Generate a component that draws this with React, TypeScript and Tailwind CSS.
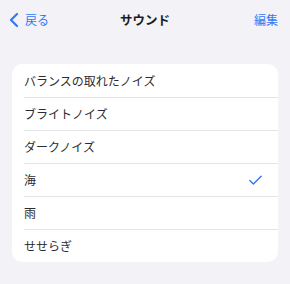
import { Check, ChevronLeft } from "lucide-react";

const sounds = ["バランスの取れたノイズ", "ブライトノイズ", "ダークノイズ", "海", "雨", "せせらぎ"];

export default function App() {
  const selected = "海";
  return (
    <div
      className="w-[290px] h-[284px] bg-[#f2f2f7] text-[#1c1c1e]"
      style={{ fontFamily: '"Noto Sans CJK JP", "Noto Sans", sans-serif' }}
    >
      {/* Nav bar */}
      <div className="relative flex items-center justify-between h-[40px] pl-[2px] pr-[12px]">
        <button className="flex items-center text-[#3478f6] text-[12px]">
          <ChevronLeft size={24} strokeWidth={2.2} className="-mr-[1px]" />
          <span>戻る</span>
        </button>
        <div className="absolute left-1/2 -translate-x-1/2 text-[12.5px] font-bold">サウンド</div>
        <button className="text-[#3478f6] text-[12px]">編集</button>
      </div>

      {/* List */}
      <div className="mx-[12px] mt-[24px] bg-white rounded-[10px] overflow-hidden">
        {sounds.map((s, i) => (
          <div key={s} className="pl-[12px]">
            <div
              className={`flex items-center justify-between h-[33px] pr-[14px] ${
                i > 0 ? "border-t border-[#e4e4e7]" : ""
              }`}
            >
              <span className="text-[12px] leading-none text-[#2c2c2e]">{s}</span>
              {s === selected && <Check size={17} strokeWidth={2} className="text-[#3478f6]" />}
            </div>
          </div>
        ))}
      </div>
    </div>
  );
}
